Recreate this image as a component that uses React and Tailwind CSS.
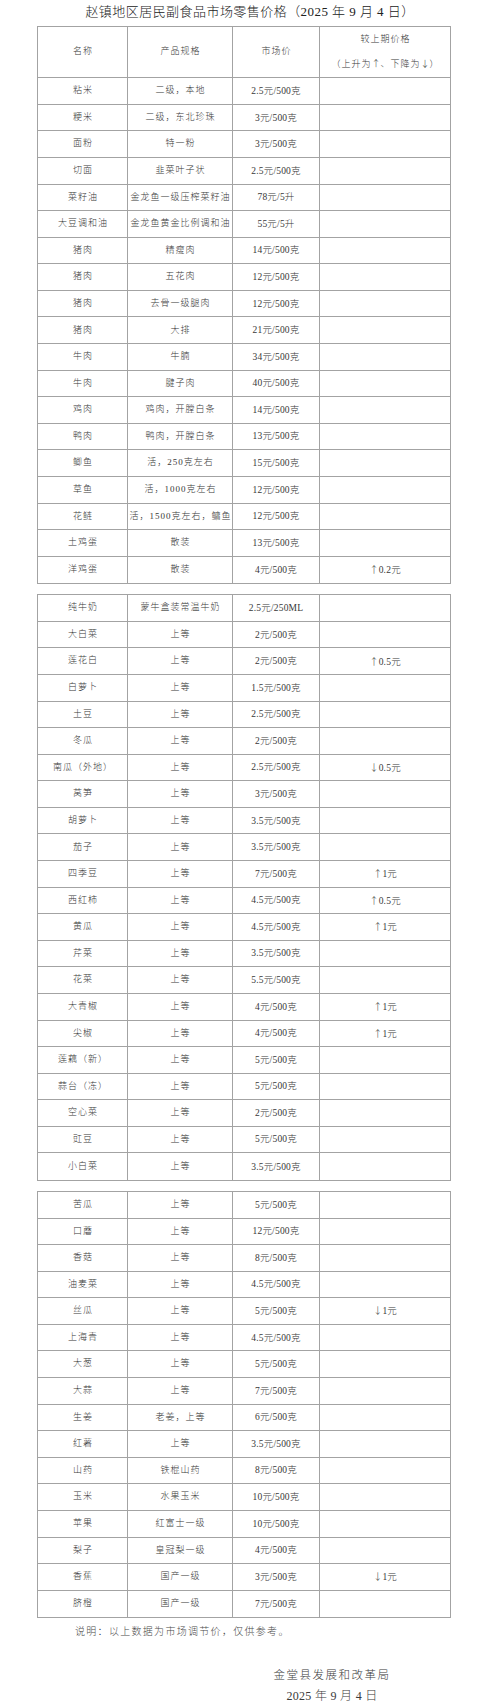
const TABLE_ONE = [
  ['粘米', '二级，本地', '2.5元/500克', ''],
  ['粳米', '二级，东北珍珠', '3元/500克', ''],
  ['面粉', '特一粉', '3元/500克', ''],
  ['切面', '韭菜叶子状', '2.5元/500克', ''],
  ['菜籽油', '金龙鱼一级压榨菜籽油', '78元/5升', ''],
  ['大豆调和油', '金龙鱼黄金比例调和油', '55元/5升', ''],
  ['猪肉', '精瘦肉', '14元/500克', ''],
  ['猪肉', '五花肉', '12元/500克', ''],
  ['猪肉', '去骨一级腿肉', '12元/500克', ''],
  ['猪肉', '大排', '21元/500克', ''],
  ['牛肉', '牛腩', '34元/500克', ''],
  ['牛肉', '腱子肉', '40元/500克', ''],
  ['鸡肉', '鸡肉，开膛白条', '14元/500克', ''],
  ['鸭肉', '鸭肉，开膛白条', '13元/500克', ''],
  ['鲫鱼', '活，250克左右', '15元/500克', ''],
  ['草鱼', '活，1000克左右', '12元/500克', ''],
  ['花鲢', '活，1500克左右，鳙鱼', '12元/500克', ''],
  ['土鸡蛋', '散装', '13元/500克', ''],
  ['洋鸡蛋', '散装', '4元/500克', '↑0.2元'],
];

const TABLE_TWO = [
  ['纯牛奶', '蒙牛盒装常温牛奶', '2.5元/250ML', ''],
  ['大白菜', '上等', '2元/500克', ''],
  ['莲花白', '上等', '2元/500克', '↑0.5元'],
  ['白萝卜', '上等', '1.5元/500克', ''],
  ['土豆', '上等', '2.5元/500克', ''],
  ['冬瓜', '上等', '2元/500克', ''],
  ['南瓜（外地）', '上等', '2.5元/500克', '↓0.5元'],
  ['莴笋', '上等', '3元/500克', ''],
  ['胡萝卜', '上等', '3.5元/500克', ''],
  ['茄子', '上等', '3.5元/500克', ''],
  ['四季豆', '上等', '7元/500克', '↑1元'],
  ['西红柿', '上等', '4.5元/500克', '↑0.5元'],
  ['黄瓜', '上等', '4.5元/500克', '↑1元'],
  ['芹菜', '上等', '3.5元/500克', ''],
  ['花菜', '上等', '5.5元/500克', ''],
  ['大青椒', '上等', '4元/500克', '↑1元'],
  ['尖椒', '上等', '4元/500克', '↑1元'],
  ['莲藕（新）', '上等', '5元/500克', ''],
  ['蒜台（冻）', '上等', '5元/500克', ''],
  ['空心菜', '上等', '2元/500克', ''],
  ['豇豆', '上等', '5元/500克', ''],
  ['小白菜', '上等', '3.5元/500克', ''],
];

const TABLE_THREE = [
  ['苦瓜', '上等', '5元/500克', ''],
  ['口蘑', '上等', '12元/500克', ''],
  ['香菇', '上等', '8元/500克', ''],
  ['油麦菜', '上等', '4.5元/500克', ''],
  ['丝瓜', '上等', '5元/500克', '↓1元'],
  ['上海青', '上等', '4.5元/500克', ''],
  ['大葱', '上等', '5元/500克', ''],
  ['大蒜', '上等', '7元/500克', ''],
  ['生姜', '老姜，上等', '6元/500克', ''],
  ['红薯', '上等', '3.5元/500克', ''],
  ['山药', '铁棍山药', '8元/500克', ''],
  ['玉米', '水果玉米', '10元/500克', ''],
  ['苹果', '红富士一级', '10元/500克', ''],
  ['梨子', '皇冠梨一级', '4元/500克', ''],
  ['香蕉', '国产一级', '3元/500克', '↓1元'],
  ['脐橙', '国产一级', '7元/500克', ''],
];

const GRID = 'grid grid-cols-[90px_105px_87px_130px] divide-x divide-[#a3a3a3]';

// arrows in the change column read as tall CJK arrows
function Arrow({ children }) {
  return <span className="font-['Noto_Sans_CJK_SC',sans-serif] tracking-normal">{children}</span>;
}

function Change({ text }) {
  if (!text) return null;
  return (
    <span className="text-[9.5px] tracking-[0.2px]">
      <Arrow>{text[0]}</Arrow>
      {text.slice(1)}
    </span>
  );
}

function Row({ row }) {
  return (
    <div className={`${GRID} h-[26.58px]`}>
      <div className="flex items-center justify-center whitespace-nowrap text-[9px] tracking-[1px] pl-[1px]">{row[0]}</div>
      <div className="flex items-center justify-center whitespace-nowrap text-[9px] tracking-[1px] pl-[1px]">{row[1]}</div>
      <div className="flex items-center justify-center whitespace-nowrap text-[9.5px] tracking-[0.2px]">{row[2]}</div>
      <div className="flex items-center justify-center whitespace-nowrap">
        <Change text={row[3]} />
      </div>
    </div>
  );
}

function PriceTable({ rows, header }) {
  return (
    <div className="border border-[#a3a3a3] divide-y divide-[#a3a3a3]">
      {header && (
        <div className={`${GRID} h-[51.6px]`}>
          <div className="flex items-center justify-center text-[9px] tracking-[1px] pl-[1px]">名称</div>
          <div className="flex items-center justify-center text-[9px] tracking-[1px] pl-[1px]">产品规格</div>
          <div className="flex items-center justify-center text-[9px] tracking-[1px] pl-[1px]">市场价</div>
          <div className="flex flex-col items-center justify-center gap-[13px] text-[9px] tracking-[1px] pl-[1px] leading-[12px]">
            <span>较上期价格</span>
            <span>
              （上升为<Arrow>↑</Arrow>、下降为<Arrow>↓</Arrow>）
            </span>
          </div>
        </div>
      )}
      {rows.map((row, i) => (
        <Row key={i} row={row} />
      ))}
    </div>
  );
}

export default function App() {
  return (
    <div className="w-[500px] h-[1705px] bg-white text-[#383838] font-light font-['Liberation_Serif','Noto_Sans_CJK_SC',serif]">
      <h1 className="h-[25.7px] flex items-center justify-center pb-[2px] text-[13px] tracking-[0.45px] text-[#222] font-light">
        赵镇地区居民副食品市场零售价格（2025 年 9 月 4 日）
      </h1>

      <div className="ml-[37px] w-[414px] flex flex-col gap-[10px]">
        <PriceTable rows={TABLE_ONE} header />
        <PriceTable rows={TABLE_TWO} />
        <PriceTable rows={TABLE_THREE} />
      </div>

      <p className="ml-[75px] leading-[28px] text-[10px] tracking-[1.3px] text-[#4a4a4a]">
        说明：以上数据为市场调节价，仅供参考。
      </p>

      <div className="mt-[19px] ml-[262px] w-[140px] text-center text-[#3a3a3a]">
        <p className="leading-[20px] text-[11.5px] tracking-[1.5px]">金堂县发展和改革局</p>
        <p className="leading-[20px] text-[12px] tracking-[0.3px] mt-[1px]">2025 年 9 月 4 日</p>
      </div>
    </div>
  );
}
